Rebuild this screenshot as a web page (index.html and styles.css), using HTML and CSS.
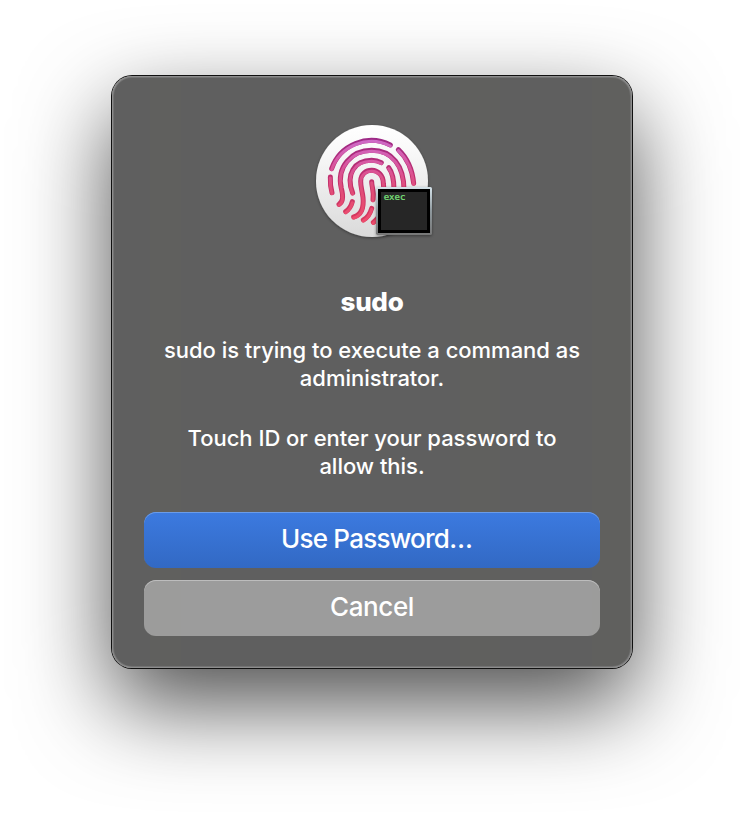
FILE: index.html
```html
<!DOCTYPE html>
<html lang="en">
<head>
<meta charset="utf-8">
<title>sudo</title>
<link rel="stylesheet" href="styles.css">
</head>
<body>
<main class="dialog" role="dialog">
  <div class="icon">
    <svg width="136" height="130" viewBox="0 0 408 390" aria-hidden="true">
      <defs>
        <linearGradient id="disc" x1="0" y1="0" x2="0" y2="1"><stop offset="0" stop-color="#fff"/><stop offset=".2" stop-color="#fafafa"/><stop offset="1" stop-color="#dadada"/></linearGradient>
        <linearGradient id="deep" gradientUnits="userSpaceOnUse" x1="0" y1="65" x2="0" y2="325"><stop offset="0" stop-color="#9c2a88"/><stop offset=".5" stop-color="#c22f6b"/><stop offset="1" stop-color="#d93a5c"/></linearGradient>
        <linearGradient id="lit" gradientUnits="userSpaceOnUse" x1="0" y1="65" x2="0" y2="325"><stop offset="0" stop-color="#cd6ccc"/><stop offset=".35" stop-color="#d95499"/><stop offset=".6" stop-color="#e04d78"/><stop offset="1" stop-color="#ef4c6c"/></linearGradient>
        <linearGradient id="frame" x1="0" y1="0" x2="0" y2="1"><stop offset="0" stop-color="#d5e3ea"/><stop offset=".5" stop-color="#8f999e"/><stop offset="1" stop-color="#777"/></linearGradient>
        <filter id="soft" x="-20%" y="-20%" width="140%" height="140%"><feDropShadow dx="0" dy="3" stdDeviation="4" flood-opacity=".4"/></filter>
        <g id="print" fill="none" stroke-linecap="round">
          <path d="M77 161A126 126 0 0 1 253 90"/>
          <path d="M277 104Q317 142 323 205"/>
          <path d="M73 186Q72 213 78 233"/>
          <path d="M99 268C112 260 112 242 106 220C91 156 136 106 197 106C258 106 294 152 294 225"/>
          <path d="M140 234C118 178 145 136 197 136Q213 136 226 143"/>
          <path d="M248 158Q264 178 264 225"/>
          <path d="M143 306C166 300 174 277 171 247C168 224 164 217 164 199C164 154 232 154 232 205L234 225"/>
          <path d="M197 200C197 216 205 228 201 254"/>
          <path d="M139 260Q134 280 119 290"/>
          <path d="M197 280Q190 305 172 315"/>
          <path d="M202 322Q214 314 222 298"/>
        </g>
      </defs>
      <circle cx="198" cy="198" r="168" fill="url(#disc)" filter="url(#soft)"/>
      <use href="#print" stroke="url(#deep)" stroke-width="15"/>
      <use href="#print" stroke="url(#lit)" stroke-width="9" transform="translate(0 3)"/>
      <rect x="210" y="216" width="168" height="144" rx="5" fill="url(#frame)" filter="url(#soft)"/>
      <rect x="216" y="222" width="156" height="132" fill="#000"/>
      <rect x="225" y="231" width="138" height="114" fill="#262626"/>
      <text class="exec" x="233" y="255" textLength="65" lengthAdjust="spacingAndGlyphs">exec</text>
    </svg>
  </div>
  <h1 class="title">sudo</h1>
  <p class="message">sudo is trying to execute a command as<br>administrator.</p>
  <p class="message message-hint">Touch ID or enter your password to<br>allow this.</p>
  <div class="actions">
    <button class="button primary">Use Password…</button>
    <button class="button secondary">Cancel</button>
  </div>
</main>
</body>
</html>
```
FILE: styles.css
```css
* { box-sizing: border-box; }
body {
  margin: 0;
  width: 744px;
  height: 816px;
  overflow: hidden;
  padding: 76px 112px;
  background: #fff;
  font-family: Inter, "Liberation Sans", sans-serif;
}
.dialog {
  width: 520px;
  height: 592px;
  padding: 39px 32px 32px;
  border-radius: 20px;
  color: #fff;
  text-align: center;
  background: linear-gradient(90deg, #5f5f5f 38px, #60605e 38px 69px, #5f5f5f 69px 348px, #60605e 348px 388px, #5f5f5f 388px 480px, #60605e 480px);
  box-shadow: inset 0 0 0 1px #8d8d8d, inset 0 0 0 2px #737373, 0 0 0 1px #111, 0 36px 90px rgba(0, 0, 0, .7);
}
.icon { display: flex; justify-content: center; padding-left: 4px; height: 130px; }
.exec { fill: #7be07b; stroke: #7be07b; stroke-width: .7px; font: 24px "DejaVu Sans Mono", monospace; }
.title { margin: 41px 0 0; font-size: 26px; line-height: 32px; font-weight: 800; letter-spacing: -.3px; }
.message { margin: 18px 0 0; font-size: 22px; line-height: 28px; font-weight: 500; letter-spacing: -.02px; white-space: nowrap; }
.message-hint { margin-top: 32px; }
.actions { display: grid; gap: 12px; margin-top: 32px; }
.button {
  height: 56px;
  padding: 0 0 3px;
  border: 0;
  border-radius: 12px;
  color: #fff;
  font: 500 26px/32px Inter, "Liberation Sans", sans-serif;
  letter-spacing: -.4px;
}
.primary { padding-left: 9px; letter-spacing: -.75px; background: linear-gradient(#3c7ae0, #3269c4); box-shadow: inset 0 1px #6b9ce8; }
.secondary { background: rgba(255, 255, 255, .38); box-shadow: inset 0 1px #bdbdbd; }
```
